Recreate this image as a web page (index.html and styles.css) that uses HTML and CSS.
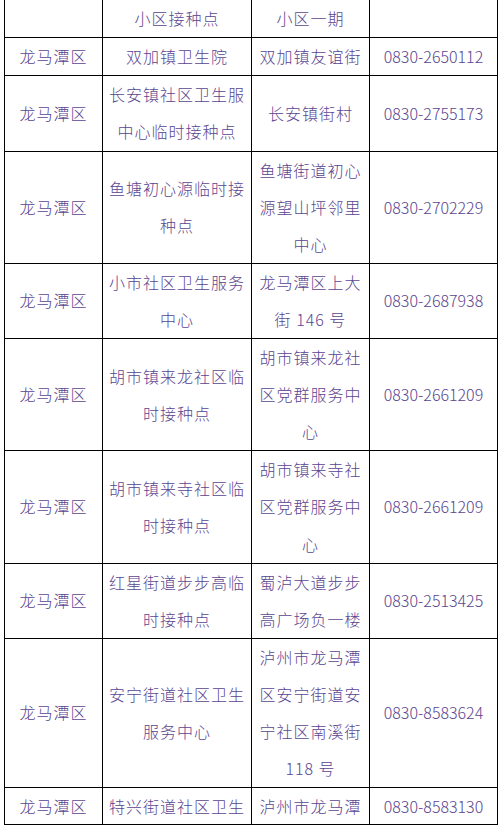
FILE: index.html
```html
<!DOCTYPE html>
<html lang="zh-CN">
<head>
<meta charset="utf-8">
<title>接种点</title>
<link rel="stylesheet" href="styles.css">
</head>
<body>
<div class="page">
<table class="sites">
<colgroup>
<col class="c-area">
<col class="c-name">
<col class="c-addr">
<col class="c-tel">
</colgroup>
<tbody>
<tr>
<td>龙马潭区</td>
<td>罗汉街道临时接种点长江花园国际城小区接种点</td>
<td>罗汉街道长江花园国际新城小区一期</td>
<td class="tel">0830-2650110</td>
</tr>
<tr>
<td>龙马潭区</td>
<td>双加镇卫生院</td>
<td>双加镇友谊街</td>
<td class="tel">0830-2650112</td>
</tr>
<tr>
<td>龙马潭区</td>
<td>长安镇社区卫生服中心临时接种点</td>
<td>长安镇街村</td>
<td class="tel">0830-2755173</td>
</tr>
<tr>
<td>龙马潭区</td>
<td>鱼塘初心源临时接种点</td>
<td>鱼塘街道初心源望山坪邻里中心</td>
<td class="tel">0830-2702229</td>
</tr>
<tr>
<td>龙马潭区</td>
<td>小市社区卫生服务中心</td>
<td>龙马潭区上大街 146 号</td>
<td class="tel">0830-2687938</td>
</tr>
<tr>
<td>龙马潭区</td>
<td>胡市镇来龙社区临时接种点</td>
<td>胡市镇来龙社区党群服务中心</td>
<td class="tel">0830-2661209</td>
</tr>
<tr>
<td>龙马潭区</td>
<td>胡市镇来寺社区临时接种点</td>
<td>胡市镇来寺社区党群服务中心</td>
<td class="tel">0830-2661209</td>
</tr>
<tr>
<td>龙马潭区</td>
<td>红星街道步步高临时接种点</td>
<td>蜀泸大道步步高广场负一楼</td>
<td class="tel">0830-2513425</td>
</tr>
<tr>
<td>龙马潭区</td>
<td>安宁街道社区卫生服务中心</td>
<td>泸州市龙马潭区安宁街道安宁社区南溪街 118 号</td>
<td class="tel">0830-8583624</td>
</tr>
<tr class="last">
<td>龙马潭区</td>
<td>特兴街道社区卫生</td>
<td>泸州市龙马潭</td>
<td class="tel">0830-8583130</td>
</tr>
</tbody>
</table>
</div>
</body>
</html>
```
FILE: styles.css
```css
html, body {
  margin: 0;
  padding: 0;
  background: #ffffff;
}

.page {
  width: 500px;
  height: 830px;
  overflow: hidden;
}

.sites {
  border-collapse: collapse;
  table-layout: fixed;
  width: 493px;
  margin: -75px 0 0 4px;
  font-family: "Noto Sans CJK SC", "Noto Sans", sans-serif;
  font-size: 16px;
  font-weight: 300;
  letter-spacing: 1px;
  line-height: 37.1px;
  color: #5a4590;
}

.c-area { width: 98px; }
.c-name { width: 149px; }
.c-addr { width: 118px; }
.c-tel { width: 128px; }

.sites td {
  border: 1px solid #000;
  padding: 0;
  text-align: center;
  vertical-align: middle;
}

.sites td.tel {
  letter-spacing: 0;
}

.sites .last td {
  line-height: 36px;
}
```
